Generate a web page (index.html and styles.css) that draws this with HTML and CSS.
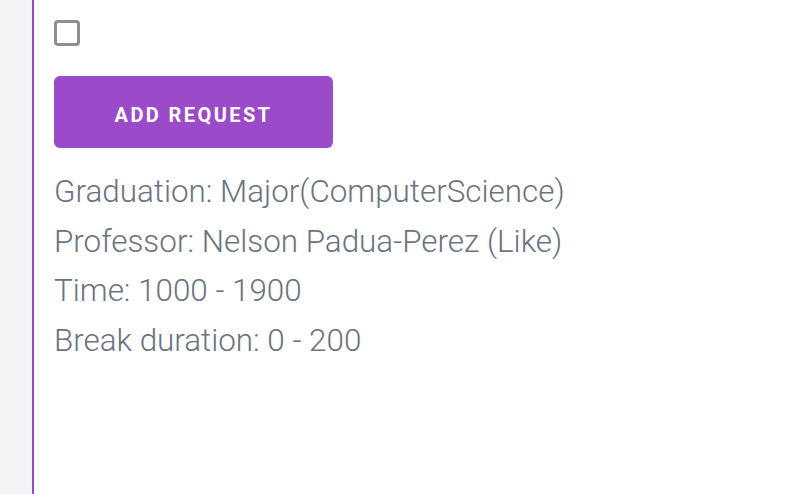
FILE: index.html
```html
<!DOCTYPE html>
<html lang="en">
<head>
    <meta charset="UTF-8">
    <meta name="viewport" content="width=device-width, initial-scale=1.0">
    <title>Request</title>
    <link rel="stylesheet" href="styles.css">
</head>
<body>
    <div class="page">
        <div class="side"></div>
        <div class="panel">
            <label class="check"><input type="checkbox"><span class="box"></span></label>
            <button class="add-btn">ADD REQUEST</button>
            <div class="details">
                <p>Graduation: Major(ComputerScience)</p>
                <p>Professor: Nelson Padua-Perez (Like)</p>
                <p>Time: 1000 - 1900</p>
                <p>Break duration: 0 - 200</p>
            </div>
        </div>
    </div>
</body>
</html>
```

FILE: styles.css
```css
body {
    margin: 0;
    font-family: Roboto, "Liberation Sans", sans-serif;
    background-color: #ffffff;
}

.page {
    display: flex;
    height: 494px;
    overflow: hidden;
}

.side {
    width: 32px;
    background-color: #f3f4f6;
    flex-shrink: 0;
}

.panel {
    flex: 1;
    border-left: 2px solid #9b4ac9;
    padding: 20px 0 0 20px;
    display: flex;
    flex-direction: column;
    align-items: flex-start;
}

.check {
    display: block;
}

.check input {
    display: none;
}

.check .box {
    display: block;
    width: 20px;
    height: 20px;
    border: 3px solid #8e8d96;
    border-radius: 4px;
}

.add-btn {
    margin-top: 30px;
    width: 279px;
    height: 72px;
    padding-top: 6px;
    background-color: #9b4ac9;
    color: white;
    border: none;
    border-radius: 6px;
    font-family: Roboto, "Liberation Sans", sans-serif;
    font-size: 20px;
    font-weight: 700;
    letter-spacing: 2.4px;
    cursor: pointer;
}

.details {
    margin-top: 19px;
}

.details p {
    margin: 0;
    font-size: 31.4px;
    font-weight: 300;
    line-height: 49.6px;
    color: #6b7280;
}
```
